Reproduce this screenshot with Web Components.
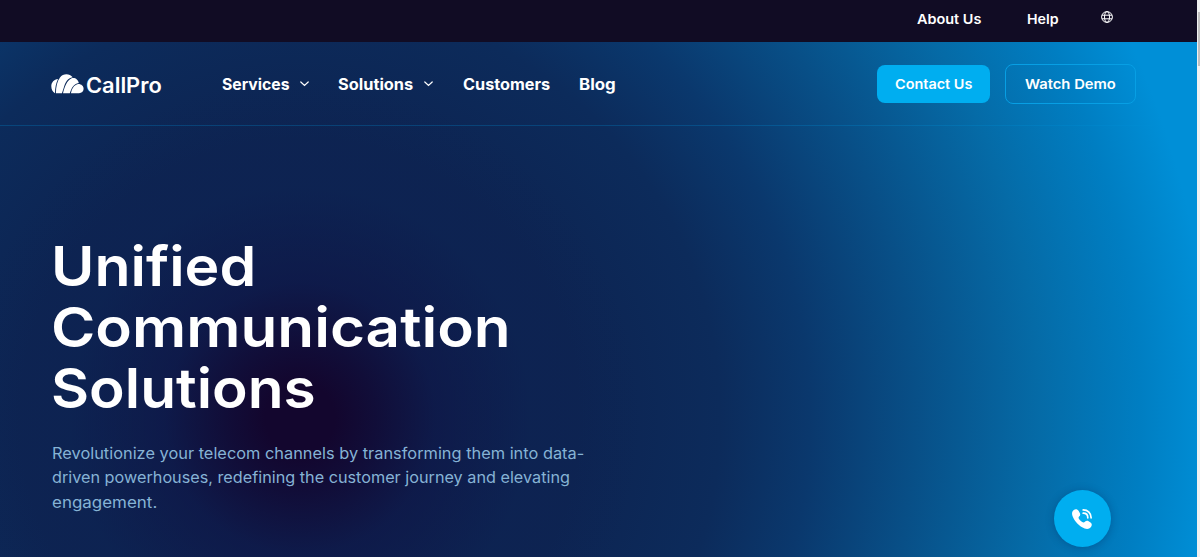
<!DOCTYPE html>
<html lang="en">
<head>
<meta charset="utf-8">
<title>CallPro</title>
<style>
    html, body { margin: 0; height: 100%; overflow: hidden; }
    body { font-family: Inter, "Open Sans", sans-serif; color: #fff; background: #f1f1f1; }
</style>
</head>
<body>
<callpro-page>
    <callpro-topbar slot="top">
        <text-run size="13.3" weight="600" width="64">About Us</text-run>
        <text-run size="13.3" weight="600" width="32">Help</text-run>
    </callpro-topbar>
    <callpro-header slot="header">
        <nav-item menu width="67">Services</nav-item>
        <nav-item menu width="75">Solutions</nav-item>
        <nav-item width="87">Customers</nav-item>
        <nav-item width="37">Blog</nav-item>
        <action-button slot="actions" variant="solid" width="77">Contact Us</action-button>
        <action-button slot="actions" variant="outline" width="91">Watch Demo</action-button>
    </callpro-header>
    <callpro-hero>
        <text-run slot="title" size="55.5" weight="600" width="205">Unified</text-run>
        <text-run slot="title" size="55.5" weight="600" width="460">Communication</text-run>
        <text-run slot="title" size="55.5" weight="600" width="265">Solutions</text-run>
        <text-run slot="lead" size="15.5" width="532">Revolutionize your telecom channels by transforming them into data-</text-run>
        <text-run slot="lead" size="15.5" width="518">driven powerhouses, redefining the customer journey and elevating</text-run>
        <text-run slot="lead" size="15.5" width="105">engagement.</text-run>
    </callpro-hero>
    <call-button slot="call"></call-button>
</callpro-page>

<script>
/**
 * <text-run>
 * One line of type, widened so that it fills the given width.
 */
class TextRun extends HTMLElement {
    constructor() {
        super();
        this.attachShadow({ mode: 'open' });
    }

    connectedCallback() {
        const size = this.getAttribute('size');
        const weight = this.getAttribute('weight') || '400';
        const width = Number(this.getAttribute('width'));
        this.shadowRoot.innerHTML = `
            <style>
                :host { display: block; width: ${width}px; white-space: nowrap; font-size: ${size}px; font-weight: ${weight}; }
                span { display: inline-block; transform-origin: 0 50%; }
            </style>
            <span><slot></slot></span>
        `;
        const span = this.shadowRoot.querySelector('span');
        span.style.transform = `scaleX(${(width / span.offsetWidth).toFixed(4)})`;
    }
}

/**
 * <nav-item>
 * Main navigation entry, with a chevron when it opens a menu.
 */
class NavItem extends HTMLElement {
    constructor() {
        super();
        this.attachShadow({ mode: 'open' });
    }

    connectedCallback() {
        const chevron = `<svg width="9" height="6" viewBox="0 0 9 6"><path d="M.8 1 4.5 4.5 8.2 1" fill="none" stroke="#fff" stroke-width="1.2" stroke-linecap="round"/></svg>`;
        this.shadowRoot.innerHTML = `
            <style>
                :host { display: flex; align-items: center; gap: 11px; line-height: 20px; }
                text-run { padding-top: 2px; }
            </style>
            <text-run size="15.5" weight="700" width="${this.getAttribute('width')}">${this.textContent}</text-run>
            ${this.hasAttribute('menu') ? chevron : ''}
        `;
    }
}

/**
 * <action-button variant="solid|outline">
 */
class ActionButton extends HTMLElement {
    constructor() {
        super();
        this.attachShadow({ mode: 'open' });
    }

    connectedCallback() {
        this.shadowRoot.innerHTML = `
            <style>
                :host { display: flex; align-items: center; justify-content: center; box-sizing: border-box; border-radius: 8px; line-height: 20px; }
                :host([variant="solid"]) { width: 113px; height: 38px; background: #00aef0; }
                :host([variant="outline"]) { width: 131px; height: 40px; border: 1px solid #079fe4; }
            </style>
            <text-run size="13.3" weight="600" width="${this.getAttribute('width')}">${this.textContent}</text-run>
        `;
    }
}

/**
 * <callpro-topbar>
 * Dark utility strip with secondary links and the language picker.
 */
class CallproTopbar extends HTMLElement {
    constructor() {
        super();
        this.attachShadow({ mode: 'open' });
        this.shadowRoot.innerHTML = `
            <style>
                :host { display: flex; align-items: center; justify-content: flex-end; gap: 46px; box-sizing: border-box; height: 42px; padding: 0 84px 4px 0; background: #110c24; line-height: 20px; }
                svg { margin: 0 0 4px -4px; }
            </style>
            <slot></slot>
            <svg width="12" height="12" viewBox="0 0 12 12" fill="none" stroke="#fff" stroke-width="1">
                <circle cx="6" cy="6" r="5.4"/>
                <ellipse cx="6" cy="6" rx="2.5" ry="5.4"/>
                <path d="M1 4.2h10M1 7.8h10"/>
            </svg>
        `;
    }
}

/**
 * <callpro-header>
 * Logo, main navigation and the action buttons.
 */
class CallproHeader extends HTMLElement {
    constructor() {
        super();
        this.attachShadow({ mode: 'open' });
        this.shadowRoot.innerHTML = `
            <style>
                :host { display: flex; align-items: center; box-sizing: border-box; height: 84px; padding: 0 61px 0 51px; border-bottom: 1px solid rgba(0, 143, 215, .27); }
                .logo { display: flex; align-items: center; gap: 2px; width: 171px; line-height: 24px; }
                .logo text-run { padding-top: 5px; }
                nav { display: flex; gap: 29.3px; flex: 1; }
                .actions { display: flex; align-items: center; gap: 15px; }
            </style>
            <div class="logo">
                <svg width="33" height="20" viewBox="0 0 33 20" fill="#fff">
                    <path d="M4 19.2C1.700 18.2.3 15.3.3 12.3.3 8.3 3 5.3 7 4.9 5 9 4 13.5 4 19.2Z"/>
                    <path d="M4.9 19.2C5 12.8 6.2 7.2 9 3.5 12-.6 18.5-.8 21.7 3.3 16.5 4.3 14.3 8.5 12.9 13.3L10.9 19.2Z"/>
                    <path d="M12 19.2C13.6 12.6 16 6.5 20.2 4.4 23.5 3 27.3 5.3 27.8 9 22.5 10 20.7 13.8 18.8 19.2Z"/>
                    <path d="M19.9 19.2C20.8 14.8 22.8 11 26.4 10.2 29.8 9.6 32.6 12 32.6 14.8 32.6 17.3 30.7 19.2 28 19.2Z"/>
                </svg>
                <text-run size="21" weight="600" width="76">CallPro</text-run>
            </div>
            <nav><slot></slot></nav>
            <div class="actions"><slot name="actions"></slot></div>
        `;
    }
}

/**
 * <callpro-hero>
 * Headline and lead paragraph.
 */
class CallproHero extends HTMLElement {
    constructor() {
        super();
        this.attachShadow({ mode: 'open' });
        this.shadowRoot.innerHTML = `
            <style>
                :host { display: block; padding: 109px 0 0 51px; }
                h1 { margin: 0; line-height: 61px; }
                p { margin: 24px 0 0 .7px; line-height: 24.4px; color: #86b3d5; }
            </style>
            <h1><slot name="title"></slot></h1>
            <p><slot name="lead"></slot></p>
        `;
    }
}

/**
 * <call-button>
 * Floating round button that starts a call.
 */
class CallButton extends HTMLElement {
    constructor() {
        super();
        this.attachShadow({ mode: 'open' });
        this.shadowRoot.innerHTML = `
            <style>
                :host { display: flex; align-items: center; justify-content: center; width: 57px; height: 57px; border-radius: 50%; background: #00aef0; box-shadow: 0 1px 8px rgba(0, 30, 80, .3); }
            </style>
            <svg width="20" height="20" viewBox="0 0 20 20" fill="none">
                <path fill="#fff" d="M1.8.9C3.5-.1 5.7.3 6.7 2L7.8 3.9C8.6 5.4 8.2 6.6 7.1 7.6 6.3 8.4 6.5 9.2 7.2 10.2 8 11.4 9 12.3 10.2 13 11.3 13.7 12.2 13.6 12.9 12.8 13.9 11.7 15.2 11.4 16.6 12.2L18.5 13.4C20 14.4 20.2 16.4 19 18 17.4 20 15 20.3 12.7 19.4 7.3 17.3 2.5 12.5.5 6.9-.4 4.4.1 2.2 1.8.9Z"/>
                <path d="M11.2.9C15.8.9 19.1 4.2 19.1 8.8M11.2 4.2C13.9 4.2 15.8 6.1 15.8 8.8" stroke="#fff" stroke-width="1.7" stroke-linecap="round"/>
            </svg>
        `;
    }
}

/**
 * <callpro-page>
 * Page frame: top bar, gradient stage and the scrollbar track.
 */
class CallproPage extends HTMLElement {
    constructor() {
        super();
        this.attachShadow({ mode: 'open' });
        this.shadowRoot.innerHTML = `
            <style>
                :host { display: grid; grid-template-columns: 1197px 3px; height: 100vh; overflow: hidden; }
                main { position: relative; display: flex; flex-direction: column; min-width: 0; }
                .stage {
                    flex: 1;
                    background:
                        radial-gradient(circle at 300px 376px, #13062e 0, #13062e 35px, rgba(18, 8, 50, .8) 75px, rgba(15, 20, 68, .6) 135px, rgba(13, 32, 80, .3) 230px, rgba(13, 38, 88, 0) 340px),
                        radial-gradient(circle at 300px 376px, #0d2353 0, #0d2452 280px, #0c2b5b 420px, #0a386d 510px, #084f87 615px, #056ba7 740px, #007ec2 840px, #008fd7 912px);
                }
                .call { position: absolute; right: 86.5px; bottom: 10px; }
                .scroll { background: #f1f1f1; }
                .thumb { height: 54px; margin: 12px 0 0 1px; background: #c1c1c1; }
            </style>
            <main>
                <slot name="top"></slot>
                <div class="stage">
                    <slot name="header"></slot>
                    <slot></slot>
                </div>
                <div class="call"><slot name="call"></slot></div>
            </main>
            <div class="scroll"><div class="thumb"></div></div>
        `;
    }
}

customElements.define('text-run', TextRun);
customElements.define('nav-item', NavItem);
customElements.define('action-button', ActionButton);
customElements.define('callpro-topbar', CallproTopbar);
customElements.define('callpro-header', CallproHeader);
customElements.define('callpro-hero', CallproHero);
customElements.define('call-button', CallButton);
customElements.define('callpro-page', CallproPage);
</script>
</body>
</html>
